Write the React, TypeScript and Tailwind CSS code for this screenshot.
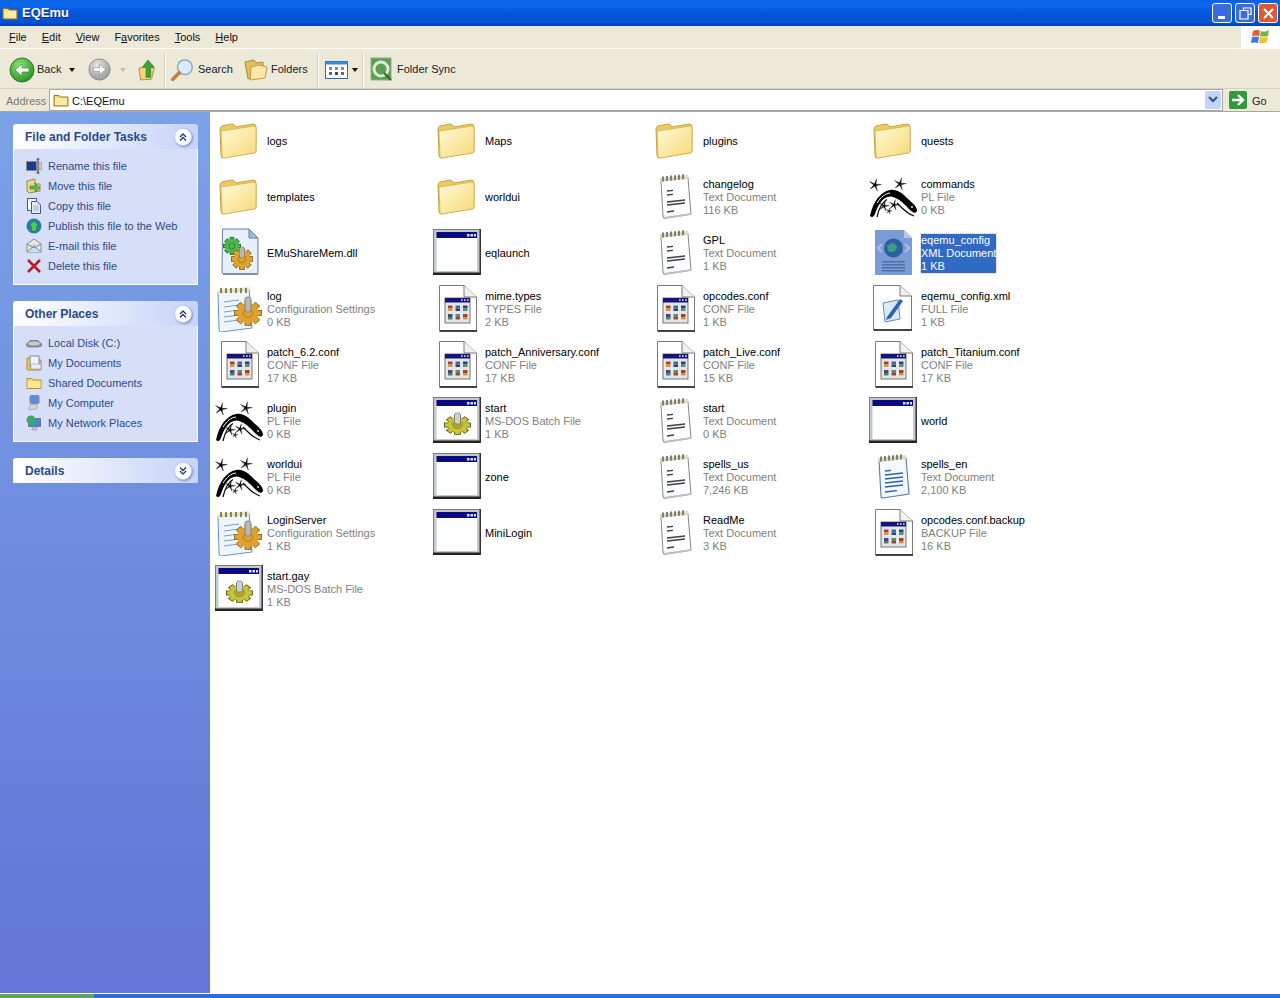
import React from "react";

function Folder() {
  return (
    <svg width="48" height="48" viewBox="0 0 48 48">
      <defs>
        <linearGradient id="fg" x1="0" y1="0" x2="1" y2="1">
          <stop offset="0" stopColor="#fffbd8" />
          <stop offset="1" stopColor="#f6d877" />
        </linearGradient>
      </defs>
      <path d="M7 10 L17 8 Q19 8 21 11 L38 8 Q41 8 41 11 L41 35 Q41 37 38 37 L8 42 Q6 42 6 39 L5 13 Q5 11 7 10Z" fill="#eecb62" stroke="#c6a244" strokeWidth="1" />
      <path d="M6 15 L20 13 L39 10 Q41 10 41 12 L41 35 Q41 37 39 37 L9 42 Q7 42 7 40Z" fill="url(#fg)" stroke="#d4b04c" strokeWidth="0.8" />
    </svg>
  );
}

function Gear({ x, y, r, ry, c = "#e0a22e", d = "#8a6414" }: { x: number; y: number; r: number; ry?: number; c?: string; d?: string }) {
  const teeth = [0, 45, 90, 135, 180, 225, 270, 315];
  const sy = (ry ?? r) / r;
  return (
    <g transform={`translate(${x} ${y}) scale(1 ${sy})`}>
      {teeth.map((a) => (
        <rect key={a} x={-r * 0.24} y={-r * 1.12} width={r * 0.48} height={r * 2.24} fill={c} stroke={d} strokeWidth="0.7" transform={`rotate(${a})`} />
      ))}
      <circle r={r * 0.86} fill={c} />
      <circle r={r * 0.4} fill="none" stroke={d} strokeWidth="0.6" />
    </g>
  );
}

function TextDoc() {
  return (
    <svg width="48" height="48" viewBox="0 0 48 48">
      <path d="M10 9 L37 6 L40 42 L14 46 Q12 46 12 44Z" fill="#fff" stroke="#8a9096" strokeWidth="1.1" />
      <path d="M13 45 L40 41 L40 43 L14 47Z" fill="#b9bfc7" />
      <path d="M9 10 L37 7 L36.5 3 L9 6Z" fill="#ddd8c0" />
      {[12, 16, 20, 24, 28, 32].map((x, i) => (
        <path key={x} d={`M${x} ${9.5 - i * 0.45} v-5`} stroke="#5f5f50" strokeWidth="1.5" />
      ))}
      <path d="M16 19 L22 18.4 M16 23 L22 22.4" stroke="#3b4048" strokeWidth="1.4" />
      <path d="M16 30 L34 28 M16 33 L34 31" stroke="#3b4048" strokeWidth="1.4" />
      <path d="M16 40 L23 39" stroke="#3b4048" strokeWidth="1.4" />
    </svg>
  );
}

function BlueTextDoc() {
  return (
    <svg width="48" height="48" viewBox="0 0 48 48">
      <path d="M10 9 L37 6 L40 42 L14 46 Q12 46 12 44Z" fill="#f4f8ff" stroke="#5a78a8" strokeWidth="1.1" />
      <path d="M9 10 L37 7 L36.5 3 L9 6Z" fill="#ddd8c0" />
      {[12, 16, 20, 24, 28, 32].map((x, i) => (
        <path key={x} d={`M${x} ${9.5 - i * 0.45} v-5`} stroke="#5f5f50" strokeWidth="1.5" />
      ))}
      <path d="M16 19 L22 18.4 M16 23 L34 21 M16 27 L34 25 M16 31 L34 29 M16 35 L34 33 M16 40 L28 38.6" stroke="#2f5fa8" strokeWidth="1.3" />
    </svg>
  );
}

function Perl() {
  const Star = ({ x, y, r = 6 }: { x: number; y: number; r?: number }) => {
    const pts = Array.from({ length: 10 }, (_, i) => {
      const a = (Math.PI * i) / 5 - Math.PI / 2 + 0.25;
      const rr = i % 2 ? r * 0.2 : r;
      return `${x + rr * Math.cos(a)},${y + rr * Math.sin(a)}`;
    }).join(" ");
    return <polygon points={pts} fill="#000" stroke="#000" strokeWidth="0.3" />;
  };
  return (
    <svg width="48" height="48" viewBox="0 0 48 48">
      <Star x={6} y={13} r={6.5} />
      <Star x={31} y={12} r={6.5} />
      <Star x={15} y={34} r={5.5} />
      <Star x={25} y={33} r={5.5} />
      <Star x={20} y={39} r={3} />
      <path d="M1 44 C4 30 11 20 21 18 C28 17 33 21 38 26 C42 30 47 33 48 38 C48 42 44 41 41 38 C35 32 30 26 22 24.5 C14 24 9 33 6 42 Q4 47 1 44Z" fill="#000" />
      <path d="M8 45 C10 36 13 30 18 27.5" fill="none" stroke="#000" strokeWidth="1.2" />
      <path d="M28 31 C32 35 38 42 45 44" fill="none" stroke="#000" strokeWidth="1.1" />
      <path d="M8 31 C12 25 16 21.5 21 21" fill="none" stroke="#fff" strokeWidth="1" />
      <circle cx="43" cy="35" r="0.9" fill="#fff" />
    </svg>
  );
}

function WinApp({ gear }: { gear?: boolean }) {
  return (
    <svg width="48" height="48" viewBox="0 0 48 48">
      <rect x="0.5" y="1.5" width="47" height="45" fill="#c6c9cc" stroke="#7d7d7d" />
      <rect x="0" y="44.5" width="48" height="2.5" fill="#222" />
      <rect x="46.5" y="1" width="1.5" height="46" fill="#333" />
      <rect x="3.5" y="4" width="40.5" height="6" fill="#0a0a80" />
      <rect x="3.5" y="10" width="40.5" height="33" fill="#fff" />
      <rect x="34" y="6" width="2.5" height="2.5" fill="#dfe3f0" />
      <rect x="37.5" y="6" width="2.5" height="2.5" fill="#dfe3f0" />
      <rect x="41" y="6" width="2" height="2.5" fill="#dfe3f0" />
      {gear && (
        <g>
          <Gear x={24.5} y={29} r={11.5} ry={8.5} c="#c9c23a" d="#4d4a10" />
          <ellipse cx="24.5" cy="28" rx="6" ry="3.5" fill="#a8a52a" />
          <rect x="21.5" y="17" width="6" height="11" rx="2" fill="#cfd2cc" stroke="#666" strokeWidth="0.6" />
        </g>
      )}
    </svg>
  );
}

function Conf() {
  return (
    <svg width="48" height="48" viewBox="0 0 48 48">
      <path d="M6.5 1.5 H31 L43.5 13 V47.5 H6.5Z" fill="#fff" stroke="#7a7a7a" />
      <path d="M7 46 H44 V48 H7Z" fill="#444" />
      <path d="M31 1.5 V13 H43.5" fill="#f2f2f2" stroke="#7a7a7a" />
      <rect x="12" y="14" width="25" height="25" fill="#e4e6ea" stroke="#555" strokeWidth="0.8" />
      <rect x="12" y="14" width="25" height="4.5" fill="#14147a" />
      <path d="M28 16 h1.6 M31 16 h1.6 M34 16 h1.6" stroke="#dfe3f0" strokeWidth="1.5" />
      {[15, 22.5, 30].map((x, i) => (
        <g key={x}>
          <rect x={x} y="21.5" width="4.5" height="3" fill={["#b03a3a", "#2a7a8a", "#3a3a8a"][i]} />
          <rect x={x} y="24.5" width="4.5" height="2.5" fill={["#c8a030", "#3a3a8a", "#4a9a5a"][i]} />
          <rect x={x} y="30" width="4.5" height="3" fill={["#5a3a8a", "#4a9a5a", "#b03a3a"][i]} />
          <rect x={x} y="33" width="4.5" height="2.5" fill={["#3a8a5a", "#b03a3a", "#c8a030"][i]} />
        </g>
      ))}
    </svg>
  );
}

function ConfigSettings() {
  return (
    <svg width="48" height="48" viewBox="0 0 48 48">
      <path d="M3 8 L34 5 L37 44 L6 48 Q4 48 4 45Z" fill="#eef5fd" stroke="#6d8fbe" strokeWidth="1" />
      <path d="M3 10 L34 7 V3 L3 6Z" fill="#e8e4c8" />
      {[6, 11, 16, 21, 26, 31].map((x) => (
        <path key={x} d={`M${x} 9 v-5`} stroke="#6b6b3a" strokeWidth="1.6" />
      ))}
      {[16, 21, 26, 31, 36].map((y) => (
        <path key={y} d={`M9 ${y + 2} L24 ${y}`} stroke="#7ea0c8" strokeWidth="1.2" />
      ))}
      <Gear x={33} y={29} r={12} ry={11} />
      <rect x="30" y="13" width="6" height="15" rx="2" fill="#b8b8b0" stroke="#666" strokeWidth="0.6" />
    </svg>
  );
}

function Dll() {
  return (
    <svg width="48" height="48" viewBox="0 0 48 48">
      <path d="M7.5 1 H34 L43 10 V45.5 H8 Q7 45.5 7 44Z" fill="#e6effb" stroke="#6d7fa4" />
      <path d="M34 1 V10 H43Z" fill="#9dbde8" stroke="#6d7fa4" />
      <path d="M8 45 H43 V47 H8Z" fill="#8090a8" />
      <Gear x={17} y={18} r={7.5} c="#4db84a" d="#1f7020" />
      <Gear x={27} y={31} r={9.5} />
      <rect x="24.5" y="19" width="5" height="11" rx="2" fill="#b8b8b0" stroke="#666" strokeWidth="0.5" />
    </svg>
  );
}

function XmlSel() {
  return (
    <svg width="48" height="48" viewBox="0 0 48 48">
      <path d="M6 2 H35 L43 10 V47 H6Z" fill="#7b9ad6" />
      <path d="M35 2 V10 H43Z" fill="#b8c8ea" />
      <circle cx="24.5" cy="20" r="9.5" fill="#2a5fa0" />
      <path d="M18 18 Q24 13 26 16 Q30 19 26 23 Q22 25 19 23Z" fill="#3d9a8a" />
      <path d="M13 16 L9 20 L13 24 M36 16 L40 20 L36 24" fill="none" stroke="#a4bbe4" strokeWidth="2.4" />
      {[33, 36, 39, 42].map((y) => (
        <rect key={y} x="13" y={y} width="23" height="1.5" fill="#4f6ea8" />
      ))}
    </svg>
  );
}

function XmlFull() {
  return (
    <svg width="48" height="48" viewBox="0 0 48 48">
      <path d="M4.5 1.5 H31 L42.5 12 V46.5 H4.5Z" fill="#fff" stroke="#7a7a7a" />
      <path d="M5 45 H43 V47 H5Z" fill="#444" />
      <path d="M31 1.5 V12 H42.5" fill="#f0f0f0" stroke="#7a7a7a" />
      <path d="M14 19 L29 16 L31 35 L16 38Z" fill="#dce8f8" stroke="#6b8ab8" />
      <path d="M18 33 L31 15 L34 17 L22 34 L17 36Z" fill="#2f62b0" />
    </svg>
  );
}

type Kind = "folder" | "text" | "bluetext" | "perl" | "app" | "bat" | "conf" | "cfg" | "dll" | "xml" | "xmlfull";

const icons: Record<Kind, React.ReactNode> = {
  folder: <Folder />,
  text: <TextDoc />,
  bluetext: <BlueTextDoc />,
  perl: <Perl />,
  app: <WinApp />,
  bat: <WinApp gear />,
  conf: <Conf />,
  cfg: <ConfigSettings />,
  dll: <Dll />,
  xml: <XmlSel />,
  xmlfull: <XmlFull />,
};

type F = { k: Kind; n: string; t?: string; s?: string; sel?: boolean };

const files: F[] = [
  { k: "folder", n: "logs" }, { k: "folder", n: "Maps" }, { k: "folder", n: "plugins" }, { k: "folder", n: "quests" },
  { k: "folder", n: "templates" }, { k: "folder", n: "worldui" }, { k: "text", n: "changelog", t: "Text Document", s: "116 KB" }, { k: "perl", n: "commands", t: "PL File", s: "0 KB" },
  { k: "dll", n: "EMuShareMem.dll" }, { k: "app", n: "eqlaunch" }, { k: "text", n: "GPL", t: "Text Document", s: "1 KB" }, { k: "xml", n: "eqemu_config", t: "XML Document", s: "1 KB", sel: true },
  { k: "cfg", n: "log", t: "Configuration Settings", s: "0 KB" }, { k: "conf", n: "mime.types", t: "TYPES File", s: "2 KB" }, { k: "conf", n: "opcodes.conf", t: "CONF File", s: "1 KB" }, { k: "xmlfull", n: "eqemu_config.xml", t: "FULL File", s: "1 KB" },
  { k: "conf", n: "patch_6.2.conf", t: "CONF File", s: "17 KB" }, { k: "conf", n: "patch_Anniversary.conf", t: "CONF File", s: "17 KB" }, { k: "conf", n: "patch_Live.conf", t: "CONF File", s: "15 KB" }, { k: "conf", n: "patch_Titanium.conf", t: "CONF File", s: "17 KB" },
  { k: "perl", n: "plugin", t: "PL File", s: "0 KB" }, { k: "bat", n: "start", t: "MS-DOS Batch File", s: "1 KB" }, { k: "text", n: "start", t: "Text Document", s: "0 KB" }, { k: "app", n: "world" },
  { k: "perl", n: "worldui", t: "PL File", s: "0 KB" }, { k: "app", n: "zone" }, { k: "text", n: "spells_us", t: "Text Document", s: "7,246 KB" }, { k: "bluetext", n: "spells_en", t: "Text Document", s: "2,100 KB" },
  { k: "cfg", n: "LoginServer", t: "Configuration Settings", s: "1 KB" }, { k: "app", n: "MiniLogin" }, { k: "text", n: "ReadMe", t: "Text Document", s: "3 KB" }, { k: "conf", n: "opcodes.conf.backup", t: "BACKUP File", s: "16 KB" },
  { k: "bat", n: "start.gay", t: "MS-DOS Batch File", s: "1 KB" },
];

function FileItem({ f }: { f: F }) {
  return (
    <div className="flex h-[56px] items-center gap-[4px]">
      <div className="h-[48px] w-[48px] shrink-0">{icons[f.k]}</div>
      <div className={f.sel ? "mt-[2px] whitespace-nowrap bg-[#316ac5] leading-[13px] text-white outline-1 outline-dotted outline-[#ccc]" : "mt-[2px] whitespace-nowrap leading-[13px]"}>
        <div className={f.sel ? "" : "text-black"}>{f.n}</div>
        {f.t && <div className={f.sel ? "" : "text-[#808080]"}>{f.t}</div>}
        {f.s && <div className={f.sel ? "" : "text-[#808080]"}>{f.s}</div>}
      </div>
    </div>
  );
}

function Chevron({ down }: { down?: boolean }) {
  return (
    <div className="flex h-[18px] w-[18px] items-center justify-center rounded-full border border-[#c4cfee] bg-white shadow-[1px_1px_2px_#7a8fc8]">
      <svg width="10" height="10" viewBox="0 0 10 10" className={down ? "rotate-180" : ""}>
        <path d="M2 5 L5 2 L8 5 M2 8.5 L5 5.5 L8 8.5" fill="none" stroke="#21347a" strokeWidth="1.3" />
      </svg>
    </div>
  );
}

function SideIcon({ k }: { k: string }) {
  switch (k) {
    case "rename":
      return (
        <svg width="16" height="16" viewBox="0 0 16 16">
          <rect x="0.5" y="3.5" width="10" height="9" fill="#1a3a9a" stroke="#888" />
          <path d="M12 1 V15 M10.5 1 H13.5 M10.5 15 H13.5" stroke="#333" strokeWidth="1" />
          <rect x="13" y="4" width="2.5" height="8" fill="#c8ccd4" stroke="#888" strokeWidth="0.5" />
        </svg>
      );
    case "move":
      return (
        <svg width="16" height="16" viewBox="0 0 16 16">
          <path d="M1 3 L9 1 V6 H14 V13 L3 15 L1 13Z" fill="#e8d48c" stroke="#a08a3c" />
          <path d="M4 8 H9 V5 L14 10 L9 14 V11 H4Z" fill="#5cb84a" stroke="#2a7a20" strokeWidth="0.5" />
        </svg>
      );
    case "copy":
      return (
        <svg width="16" height="16" viewBox="0 0 16 16">
          <rect x="1.5" y="0.5" width="9" height="12" fill="#fff" stroke="#3b5b9a" />
          <path d="M5.5 3.5 H11 L14.5 7 V15.5 H5.5Z" fill="#e9effb" stroke="#3b5b9a" />
          <path d="M7 8 H13 M7 10 H13 M7 12 H13" stroke="#9ab0d8" />
        </svg>
      );
    case "web":
      return (
        <svg width="16" height="16" viewBox="0 0 16 16">
          <circle cx="8" cy="8" r="7.5" fill="#2d7ab0" />
          <path d="M8 3 L13 8 H10.5 V13 H5.5 V8 H3Z" fill="#4cd04c" stroke="#1d7a20" strokeWidth="0.5" />
        </svg>
      );
    case "mail":
      return (
        <svg width="16" height="16" viewBox="0 0 16 16">
          <path d="M1 6 L8 1 L15 6 V14 H1Z" fill="#f3e9cf" stroke="#7a8ca8" />
          <path d="M1 14 L8 8 L15 14 M1 6 L8 10 L15 6" fill="#cfdcf3" stroke="#7a8ca8" />
        </svg>
      );
    case "delete":
      return (
        <svg width="16" height="16" viewBox="0 0 16 16">
          <path d="M2 2 L14 14 M14 2 L2 14" stroke="#b0202a" strokeWidth="2.6" />
        </svg>
      );
    case "disk":
      return (
        <svg width="16" height="16" viewBox="0 0 16 16">
          <path d="M0.5 9 L4 5.5 H12 L15.5 9 V11 L12 12 H3 L0.5 11Z" fill="#8f9296" stroke="#606060" strokeWidth="0.6" />
          <ellipse cx="8" cy="8.5" rx="6" ry="2" fill="#c8cacc" />
        </svg>
      );
    case "docs":
      return (
        <svg width="16" height="16" viewBox="0 0 16 16">
          <path d="M1 3 H6 L7 5 H15 V14 Q15 15 14 15 H2 Q1 15 1 14Z" fill="#ecc659" stroke="#b78f2c" />
          <rect x="4" y="1" width="9" height="10" fill="#eef2fb" stroke="#7a8ca8" />
          <path d="M5 9 H15 V14 H5Z" fill="#e8eef8" stroke="#7a8ca8" strokeWidth="0.5" />
        </svg>
      );
    case "shared":
      return (
        <svg width="16" height="16" viewBox="0 0 16 16">
          <path d="M1 3.5 H6 L7.5 5 H15 V13.5 H1Z" fill="#f6d66b" stroke="#b78f2c" />
          <rect x="1.5" y="6" width="13" height="7" fill="#fbe68e" />
        </svg>
      );
    case "pc":
      return (
        <svg width="16" height="16" viewBox="0 0 16 16">
          <rect x="4" y="0.5" width="9" height="8" rx="1" fill="#5a8ee0" stroke="#808a9a" />
          <path d="M4 10 L11 9 L11 14 L3 15Z" fill="#d0d4dc" stroke="#8a8f98" strokeWidth="0.5" />
        </svg>
      );
    default:
      return (
        <svg width="16" height="16" viewBox="0 0 16 16">
          <rect x="2.5" y="3.5" width="12" height="8" fill="#3f88d8" stroke="#6a7a90" />
          <circle cx="5" cy="5" r="4.5" fill="#3fa868" />
          <path d="M6 12 H11 V15 H6Z" fill="#c0c6d0" stroke="#8a8f98" strokeWidth="0.5" />
        </svg>
      );
  }
}

function Panel({ title, items, down }: { title: string; items?: [string, string][]; down?: boolean }) {
  return (
    <div>
      <div className="flex h-[25px] items-center justify-between rounded-t-[3px] bg-gradient-to-r from-white to-[#c6d3f7] pl-[12px] pr-[6px]">
        <span className="text-[12px] font-bold text-[#2a4b87]">{title}</span>
        <Chevron down={down} />
      </div>
      {items && (
        <div className="flex flex-col border border-t-0 border-white bg-[#d6dff7] pb-[8px] pl-[12px] pt-[7px]">
          {items.map(([k, t]) => (
            <div key={t} className="flex h-[20px] items-center gap-[6px] text-[#2c4a8e]">
              <div className="h-[16px] w-[16px]"><SideIcon k={k} /></div>
              <span>{t}</span>
            </div>
          ))}
        </div>
      )}
    </div>
  );
}

function Divider() {
  return <div className="h-[34px] w-px bg-[#d4d0c0] shadow-[1px_0_0_#fff]" />;
}

function RoundArrow({ grey, size = 26 }: { grey?: boolean; size?: number }) {
  return (
    <svg width={size} height={size} viewBox="0 0 26 26">
      <defs>
        <radialGradient id={grey ? "agy" : "agn"} cx="0.4" cy="0.3" r="0.8">
          <stop offset="0" stopColor={grey ? "#e8e8e8" : "#8fe07a"} />
          <stop offset="1" stopColor={grey ? "#8e8e8e" : "#1e8a1e"} />
        </radialGradient>
      </defs>
      <circle cx="13" cy="13" r="12" fill={`url(#${grey ? "agy" : "agn"})`} stroke={grey ? "#8a8a8a" : "#287a28"} />
      {grey ? (
        <path d="M6 11 H13 V7 L20 13 L13 19 V15 H6Z" fill="#fff" stroke="#777" strokeWidth="0.6" />
      ) : (
        <path d="M20 11 H13 V7 L6 13 L13 19 V15 H20Z" fill="#fff" stroke="#1e7a1e" strokeWidth="0.6" />
      )}
    </svg>
  );
}

function SmallFolder() {
  return (
    <svg width="16" height="16" viewBox="0 0 16 16">
      <path d="M1 3.5 H6 L7.5 5 H15 V14 H1Z" fill="#f6d66b" stroke="#96762a" />
      <rect x="2" y="6" width="12" height="7" fill="#fde9a0" />
    </svg>
  );
}

function ToolFolders() {
  return (
    <svg width="24" height="24" viewBox="0 0 24 24">
      <path d="M1 4 L10 2 L12 5 L19 4 V16 L4 21Z" fill="#e3bd5c" stroke="#a98a36" />
      <path d="M7 9 L15 7 L23 9 L21 20 L6 22Z" fill="#fbe8a8" stroke="#c09c3e" />
    </svg>
  );
}

export default function App() {
  return (
    <div className="flex h-[998px] w-[1280px] flex-col overflow-hidden bg-white text-[11px]" style={{ fontFamily: '"Liberation Sans", Arial, sans-serif' }}>
      {/* title bar */}
      <div className="flex h-[26px] shrink-0 items-center justify-between bg-[linear-gradient(#0a5fe0,#0b6af0_15%,#0553d8_55%,#0452d6_85%,#0340b0)] pl-[2px] pr-[2px]">
        <div className="flex items-center gap-[4px]">
          <SmallFolder />
          <span className="text-[13px] font-bold text-white [text-shadow:1px_1px_#0a2a80]">EQEmu</span>
        </div>
        <div className="flex gap-[3px]">
          <div className="flex h-[20px] w-[20px] items-end justify-start rounded-[3px] border border-white bg-[#3a6bdc] pb-[3px] pl-[5px]">
            <div className="h-[3px] w-[7px] bg-white" />
          </div>
          <div className="flex h-[20px] w-[20px] items-center justify-center rounded-[3px] border border-white bg-[#3a6bdc]">
            <svg width="13" height="13" viewBox="0 0 13 13"><path d="M4.5 3.5 V1 H12 V7.5 H9.5 M1 3.5 H9 V12 H1Z" fill="none" stroke="#fff" strokeWidth="1.2" /></svg>
          </div>
          <div className="flex h-[20px] w-[20px] items-center justify-center rounded-[3px] border border-white bg-[#dc5a35]">
            <svg width="13" height="13" viewBox="0 0 13 13"><path d="M2 2 L11 11 M11 2 L2 11" stroke="#fff" strokeWidth="2" /></svg>
          </div>
        </div>
      </div>
      {/* menu */}
      <div className="flex h-[23px] shrink-0 items-center justify-between border-b border-white bg-[#ece9d8] text-[#111]">
        <div className="flex gap-[15px] pl-[9px]">
          <span><u>F</u>ile</span><span><u>E</u>dit</span><span><u>V</u>iew</span><span>F<u>a</u>vorites</span><span><u>T</u>ools</span><span><u>H</u>elp</span>
        </div>
        <div className="flex h-[22px] w-[39px] items-center justify-center bg-white">
          <svg width="20" height="20" viewBox="0 0 20 20">
            <path d="M2 4 Q6 2 9 4 L8 9 Q5 8 1 9Z" fill="#e85a2a" />
            <path d="M10 4 Q14 6 18 3 L17 9 Q13 10 9 9Z" fill="#6db83a" />
            <path d="M1 10 Q4 9 8 10 L7 16 Q4 15 0 16Z" fill="#3d7ad8" />
            <path d="M9 10 Q13 11 17 10 L16 15 Q12 17 8 16Z" fill="#f2c22e" />
          </svg>
        </div>
      </div>
      {/* toolbar */}
      <div className="flex h-[40px] shrink-0 items-center border-b border-[#d4d0c0] bg-[#ece9d8] pl-[9px] pt-[2px] text-[#222]">
        <RoundArrow />
        <span className="ml-[2px] w-[24px] text-center">Back</span>
        <svg width="6" height="4" viewBox="0 0 6 4" className="ml-[8px]"><path d="M0 0 H6 L3 4Z" fill="#111" /></svg>
        <div className="ml-[13px]"><RoundArrow grey size={23} /></div>
        <svg width="6" height="4" viewBox="0 0 6 4" className="ml-[9px]"><path d="M0 0 H6 L3 4Z" fill="#bbb" /></svg>
        <svg width="20" height="24" viewBox="0 0 22 24" className="ml-[11px]">
          <path d="M2 10 L12 8 L19 10 L16 22 L4 23Z" fill="#f0d37a" stroke="#a98a36" />
          <path d="M10 20 V9 H6 L12 1 L19 9 H15 V20Z" fill="#3aa53a" stroke="#1d701d" strokeWidth="0.6" />
        </svg>
        <div className="ml-[7px]"><Divider /></div>
        <svg width="24" height="26" viewBox="0 0 26 26" className="ml-[6px]">
          <circle cx="15" cy="10" r="8" fill="#d8ecfa" stroke="#8aa4b8" strokeWidth="1.5" />
          <path d="M9 16 L2 23" stroke="#c08040" strokeWidth="4" strokeLinecap="round" />
        </svg>
        <span className="ml-[3px] w-[34px] text-center">Search</span>
        <div className="ml-[12px]"><ToolFolders /></div>
        <span className="ml-[3px] w-[36px] text-center">Folders</span>
        <div className="ml-[10px]"><Divider /></div>
        <svg width="24" height="20" viewBox="0 0 24 20" className="ml-[7px]">
          <rect x="0.5" y="1.5" width="22" height="17" fill="#fff" stroke="#2a6aa8" />
          <rect x="0.5" y="1.5" width="22" height="3" fill="#3a8ad8" />
          {[4, 10, 16].map((x) => (
            <g key={x}>
              <rect x={x} y="7" width="3" height="3" fill="#8a8f78" />
              <rect x={x} y="12" width="3" height="3" fill={x === 10 ? "#2a4a8a" : "#5a6a7a"} />
            </g>
          ))}
        </svg>
        <svg width="6" height="4" viewBox="0 0 6 4" className="ml-[3px]"><path d="M0 0 H6 L3 4Z" fill="#111" /></svg>
        <div className="ml-[4px]"><Divider /></div>
        <svg width="24" height="26" viewBox="0 0 24 26" className="ml-[7px]">
          <rect x="1" y="1" width="20" height="22" fill="#5f9c54" stroke="#9aa88a" />
          <circle cx="11" cy="12" r="7" fill="none" stroke="#d8f0d0" strokeWidth="3" />
          <path d="M14 16 L21 23" stroke="#2a6a2a" strokeWidth="2" />
        </svg>
        <span className="ml-[3px]">Folder Sync</span>
      </div>
      {/* address */}
      <div className="flex h-[23px] shrink-0 items-center border-b border-[#aca899] bg-[#ece9d8]">
        <span className="w-[49px] pl-[6px] pt-[2px] text-[#7a7a70]">Address</span>
        <div className="flex h-[22px] w-[1174px] items-center justify-between border border-[#a4a8ac] bg-white pl-[3px]">
          <div className="flex items-center gap-[3px]">
            <SmallFolder />
            <span className="pt-[2px] text-[#111]">C:\EQEmu</span>
          </div>
          <div className="mr-[1px] flex h-[18px] w-[16px] items-center justify-center rounded-[2px] bg-[#c3d3f8]">
            <svg width="10" height="8" viewBox="0 0 10 8"><path d="M1 1 L5 5 L9 1" fill="none" stroke="#34507c" strokeWidth="2" /></svg>
          </div>
        </div>
        <div className="ml-[6px] flex h-[18px] w-[18px] items-center justify-center rounded-[2px] bg-[#2e9a3e]">
          <svg width="14" height="12" viewBox="0 0 14 12"><path d="M1 6 H12 M7 1 L12 6 L7 11" fill="none" stroke="#fff" strokeWidth="2.4" /></svg>
        </div>
        <span className="ml-[5px] pt-[2px] text-[#222]">Go</span>
      </div>
      {/* main */}
      <div className="flex min-h-0 flex-1">
        <div className="flex w-[210px] shrink-0 flex-col gap-[16px] bg-[linear-gradient(#7ba2e7,#6375d6)] pl-[13px] pr-[12px] pt-[12px]">
          <Panel title="File and Folder Tasks" items={[["rename", "Rename this file"], ["move", "Move this file"], ["copy", "Copy this file"], ["web", "Publish this file to the Web"], ["mail", "E-mail this file"], ["delete", "Delete this file"]]} />
          <Panel title="Other Places" items={[["disk", "Local Disk (C:)"], ["docs", "My Documents"], ["shared", "Shared Documents"], ["pc", "My Computer"], ["net", "My Network Places"]]} />
          <Panel title="Details" down />
        </div>
        <div className="grid flex-1 grid-cols-[218px_218px_218px_218px] content-start pl-[5px]">
          {files.map((f, i) => <FileItem key={i} f={f} />)}
        </div>
      </div>
      {/* taskbar */}
      <div className="flex h-[5px] shrink-0 border-t border-white">
        <div className="w-[94px] bg-[#5fa85a]" />
        <div className="flex-1 bg-[#2a6fe0]" />
      </div>
    </div>
  );
}
